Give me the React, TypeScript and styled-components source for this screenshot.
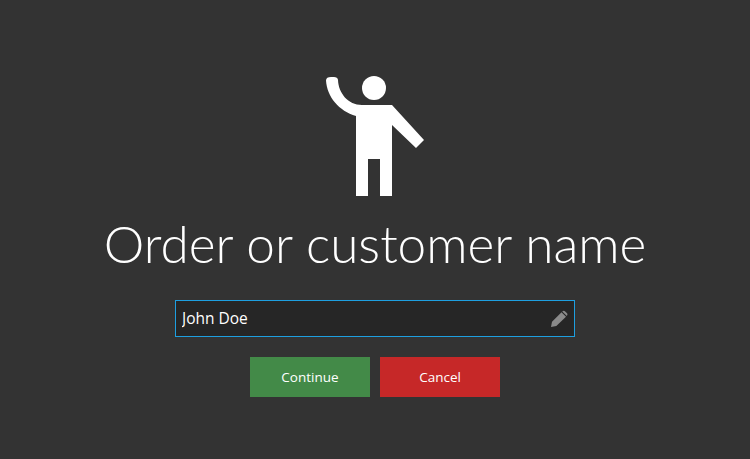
import React from "react";
import styled, { createGlobalStyle } from "styled-components";

const Global = createGlobalStyle`
  html, body { margin: 0; padding: 0; background: #333333; }
  #root { width: 100%; }
`;

const Page = styled.main`
  width: 100%;
  height: 459px;
  overflow: hidden;
  background: #333333;
  display: flex;
  flex-direction: column;
  align-items: center;
  padding-top: 73px;
  box-sizing: border-box;
  font-family: "Open Sans", "Noto Sans", "Liberation Sans", sans-serif;
`;

const Figure = styled.svg`
  display: block;
  width: 100px;
  height: 125px;
  flex: none;
`;

const Title = styled.h1`
  margin: 11px 0 0;
  font-family: Lato, "Open Sans", sans-serif;
  font-size: 51.3px;
  line-height: 68px;
  font-weight: 300;
  color: #ffffff;
  white-space: nowrap;
`;

const Field = styled.label`
  margin-top: 23px;
  width: 400px;
  height: 37px;
  box-sizing: border-box;
  display: flex;
  align-items: center;
  justify-content: space-between;
  padding: 0 6px;
  background: #262626;
  border: 1px solid #1e9fe0;
`;

const Input = styled.input`
  flex: 1;
  min-width: 0;
  margin-bottom: 2px;
  border: 0;
  outline: 0;
  padding: 0;
  background: transparent;
  color: #ffffff;
  font-family: inherit;
  font-size: 15.5px;
`;

const Pencil = styled.svg`
  display: block;
  width: 18px;
  height: 18px;
  flex: none;
`;

const Actions = styled.div`
  margin-top: 20px;
  display: flex;
  gap: 10px;
`;

const Action = styled.button<{ $tone: string }>`
  width: 120px;
  height: 40px;
  border: 0;
  padding: 0;
  background: ${(p) => p.$tone};
  color: #ffffff;
  font-family: inherit;
  font-size: 13.5px;
`;

export default function App() {
  return (
    <Page>
      <Global />
      <Figure viewBox="0 0 100 125" aria-hidden="true">
        <circle cx="49" cy="15" r="12" fill="#fff" />
        <path
          fill="#fff"
          d="M1 7.5C1 5 3 4 6 4H9C11 4 13 5 13 7C13.500 20 23 32 37 32H67L99 67L91 75L67 52V123H55V86H43V123H31V43C14 38 2 24 1 7.500Z"
        />
      </Figure>
      <Title>Order or customer name</Title>
      <Field>
        <Input defaultValue="John Doe" aria-label="Order or customer name" />
        <Pencil viewBox="0 0 18 18" aria-hidden="true">
          <path
            fill="#8a8a8a"
            d="M1 17L2 11.800L11.500 2.300L16 6.800L6.300 16ZM12.600 1.200C13.300 .5 14.200 .5 14.900 1.200L17 3.300C17.600 4 17.600 4.800 17 5.500L16.800 5.900L12.200 1.500Z"
          />
        </Pencil>
      </Field>
      <Actions>
        <Action $tone="#438a48">Continue</Action>
        <Action $tone="#c62828">Cancel</Action>
      </Actions>
    </Page>
  );
}
